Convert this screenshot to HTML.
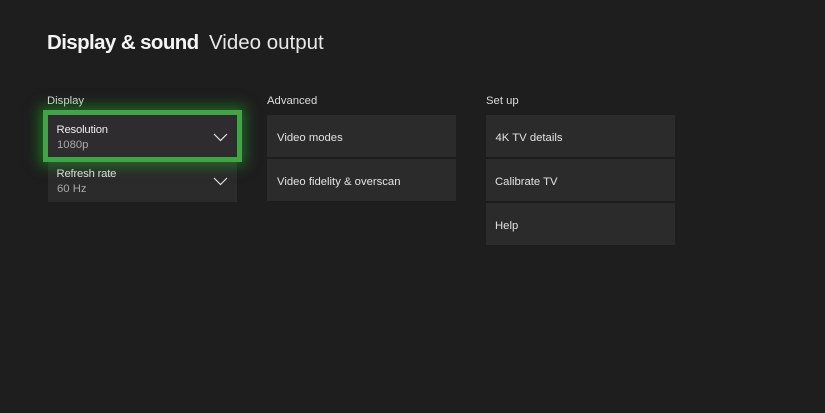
<!DOCTYPE html>
<html>
<head>
<meta charset="utf-8">
<style>
html,body{margin:0;padding:0;width:825px;height:413px;overflow:hidden;background:#1e1e1e;}
body{position:relative;font-family:"Liberation Sans",sans-serif;}
.t{position:absolute;white-space:nowrap;font-family:"Liberation Sans",sans-serif;}
.tile{position:absolute;background:#2b2b2b;}
.lab{font-size:11.3px;color:#dcdcdc;line-height:14px;}
.item{font-size:11.3px;color:#e2e2e2;line-height:14px;}
.sub{font-size:11.3px;color:#a8a8a8;line-height:14px;}
svg{position:absolute;}
</style>
</head>
<body>
<div class="t" style="left:47px;top:30px;font-size:20.5px;line-height:26px;font-weight:700;color:#f4f4f4;letter-spacing:-0.6px;">Display &amp; sound</div>
<div class="t" style="left:209px;top:30px;font-size:20.5px;line-height:26px;color:#e8e8e8;font-weight:400;">Video output</div>

<div class="t lab" style="left:47px;top:94px;">Display</div>
<div class="t lab" style="left:267px;top:94px;">Advanced</div>
<div class="t lab" style="left:486px;top:94px;">Set up</div>

<div class="tile" style="left:48px;top:160px;width:189px;height:42px;"></div>
<div class="t item" style="left:56.5px;top:167px;letter-spacing:-0.2px;">Refresh rate</div>
<div class="t sub" style="left:57px;top:182px;">60 Hz</div>
<svg style="left:213px;top:177px" width="15" height="9" viewBox="0 0 15 9"><path d="M1 1L7.5 7.5L14 1" fill="none" stroke="#e0e0e0" stroke-width="1.2"/></svg>

<div class="tile" style="left:43px;top:110px;width:189px;height:42px;background:#2e2c2e;border:5px solid #43a447;box-shadow:0 0 12px 4px rgba(30,170,40,.5);"></div>
<div class="t item" style="left:56.5px;top:123px;color:#ececec;letter-spacing:-0.2px;">Resolution</div>
<div class="t sub" style="left:57px;top:138px;">1080p</div>
<svg style="left:213px;top:133px" width="15" height="9" viewBox="0 0 15 9"><path d="M1 1L7.5 7.5L14 1" fill="none" stroke="#e8e8e8" stroke-width="1.2"/></svg>

<div class="tile" style="left:267px;top:115px;width:189px;height:42px;"></div>
<div class="tile" style="left:267px;top:159px;width:189px;height:42px;"></div>
<div class="t item" style="left:277px;top:131px;">Video modes</div>
<div class="t item" style="left:277px;top:175px;">Video fidelity &amp; overscan</div>

<div class="tile" style="left:486px;top:115px;width:189px;height:42px;"></div>
<div class="tile" style="left:486px;top:159px;width:189px;height:42px;"></div>
<div class="tile" style="left:486px;top:203px;width:189px;height:42px;"></div>
<div class="t item" style="left:495.5px;top:131px;">4K TV details</div>
<div class="t item" style="left:495px;top:175px;">Calibrate TV</div>
<div class="t item" style="left:495px;top:219px;">Help</div>
</body>
</html>
